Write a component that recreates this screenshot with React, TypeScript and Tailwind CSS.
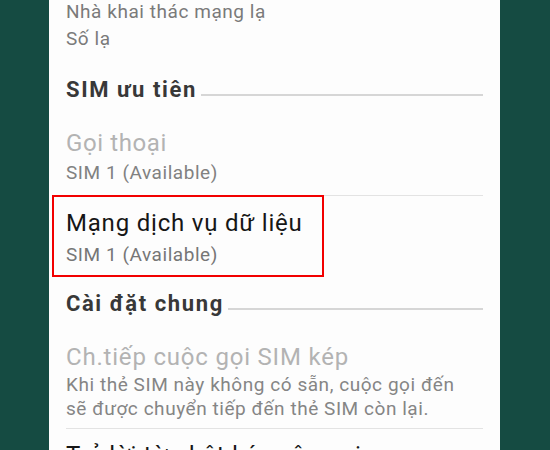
import React from 'react';

function Header({ title, className }: { title: string; className: string }) {
  return (
    <div className={`flex items-end h-[24px] ${className}`}>
      <h3 className="text-[22px] leading-[24px] font-bold tracking-[1.6px] text-[#383838] whitespace-nowrap">{title}</h3>
      <div className="flex-1 h-[2px] bg-[#d6d6d6] ml-[4px] mb-[6px]" />
    </div>
  );
}

export default function App() {
  return (
    <div
      className="w-[550px] h-[450px] overflow-hidden bg-[#154b42] flex justify-center"
      style={{ fontFamily: 'Roboto, "Noto Sans", sans-serif' }}
    >
      <div className="w-[451px] h-full bg-[#fdfdfd] px-[17px] -ml-[1px]">
        <div className="-mt-[2px] text-[19px] leading-[27px] tracking-[0.55px] text-[#7a7a7a]">
          <div>Nhà khai thác mạng lạ</div>
          <div>Số lạ</div>
        </div>

        <Header title="SIM ưu tiên" className="mt-[26px]" />

        <div className="pt-[27px] pb-[10px] border-b border-[#e3e3e3]">
          <div className="text-[24px] leading-[28px] tracking-[0.6px] text-[#b3b3b3]">Gọi thoại</div>
          <div className="mt-[4px] text-[19px] leading-[24px] tracking-[0.55px] text-[#818181]">SIM 1 (Available)</div>
        </div>

        <div className="relative pt-[13px] pb-[9px]">
          <div className="text-[24px] leading-[28px] tracking-[0.8px] text-[#161616]">Mạng dịch vụ dữ liệu</div>
          <div className="mt-[6px] text-[19px] leading-[24px] tracking-[0.55px] text-[#767676]">SIM 1 (Available)</div>
          <div className="absolute -left-[14px] -top-[1px] w-[272px] h-[82px] border-2 border-[#f20000]" />
        </div>

        <Header title="Cài đặt chung" className="mt-[16px]" />

        <div className="pt-[27px] pb-[8px] border-b border-[#e3e3e3]">
          <div className="text-[24px] leading-[28px] tracking-[0.8px] text-[#b3b3b3]">Ch.tiếp cuộc gọi SIM kép</div>
          <div className="mt-[2px] text-[19px] leading-[23.5px] tracking-[0.55px] text-[#858585]">
            Khi thẻ SIM này không có sẵn, cuộc gọi đến
            <br />
            sẽ được chuyển tiếp đến thẻ SIM còn lại.
          </div>
        </div>

        <div className="pt-[12px] pb-[10px]">
          <div className="text-[24px] leading-[28px] tracking-[0.8px] text-[#161616]">Trả lời từ nhật ký cuộc gọi</div>
        </div>
      </div>
    </div>
  );
}
